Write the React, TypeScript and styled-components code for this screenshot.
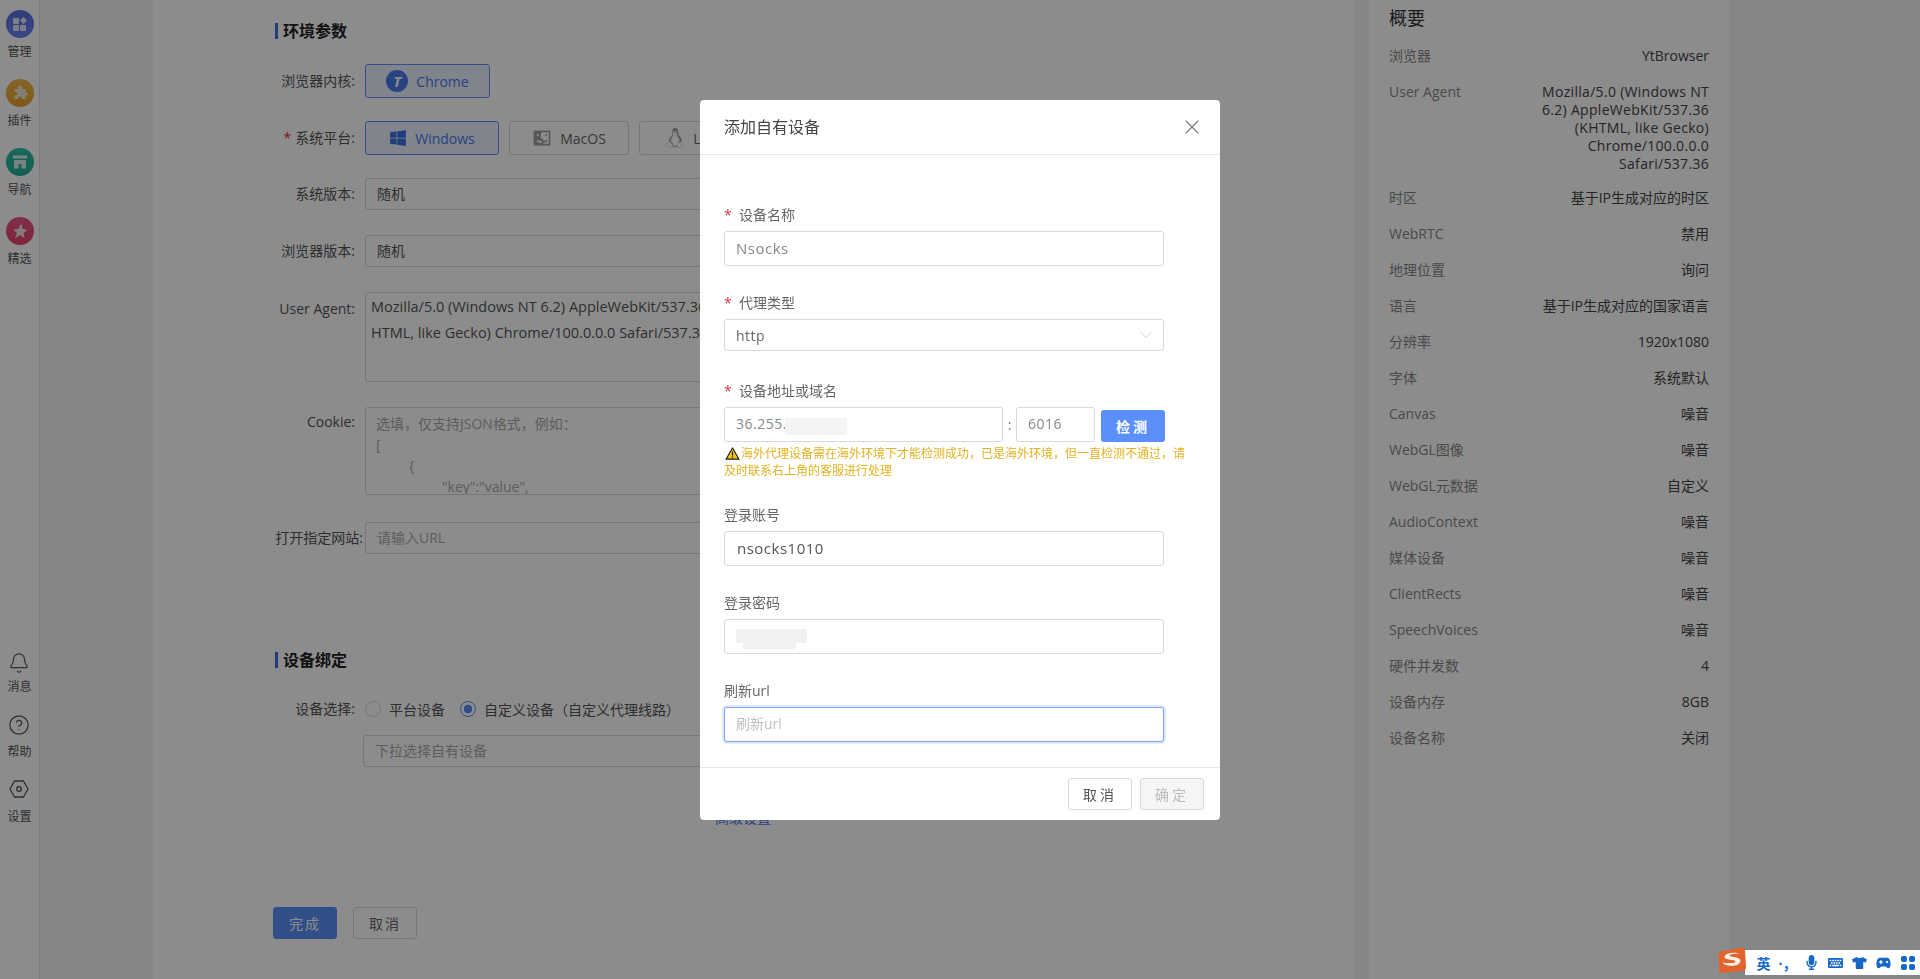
import React from 'react';
import styled, { createGlobalStyle } from 'styled-components';
import { Bell, ChevronDown, CircleHelp, X } from 'lucide-react';
import { FaKeyboard, FaLinux, FaMicrophone, FaTshirt, FaWindows } from 'react-icons/fa';
import { RiFinderFill } from 'react-icons/ri';

const FONT = '"Open Sans", "Noto Sans CJK SC", sans-serif';

const GlobalStyle = createGlobalStyle`
  html, body {
    margin: 0;
    height: 100%;
    overflow: hidden;
    background: #ffffff;
    font-family: ${FONT};
    font-size: 14px;
    color: #333333;
  }
  * { box-sizing: border-box; }
`;

const Page = styled.div`
  display: flex;
  width: 1920px;
  height: 979px;
  background: #f2f4f7;
`;

const Rail = styled.nav`
  display: flex;
  flex-direction: column;
  justify-content: space-between;
  width: 40px;
  padding: 10px 0 154px;
  background: #ffffff;
  border-right: 1px solid #dcdfe4;
`;

const RailGroup = styled.div<{ $gap: number }>`
  display: flex;
  flex-direction: column;
  align-items: center;
  gap: ${(p) => p.$gap}px;
`;

const RailItem = styled.div<{ $gap: number }>`
  display: flex;
  flex-direction: column;
  align-items: center;
  gap: ${(p) => p.$gap}px;
  font-size: 12px;
  line-height: 16px;
  color: #555555;
`;

const RailBadge = styled.div<{ $from: string; $to: string }>`
  display: flex;
  align-items: center;
  justify-content: center;
  width: 28px;
  height: 28px;
  border-radius: 50%;
  background: linear-gradient(180deg, ${(p) => p.$from}, ${(p) => p.$to});
`;

const LeftGap = styled.div`
  width: 113px;
`;

const Main = styled.main`
  width: 1201px;
  padding: 23px 0 0 122px;
  background: #ffffff;
  overflow: hidden;
`;

const SectionTitle = styled.h2<{ $top?: number }>`
  margin: ${(p) => p.$top ?? 0}px 0 0;
  padding-left: 5px;
  border-left: 3px solid #3d6fe0;
  font-size: 16px;
  line-height: 16px;
  font-weight: 700;
  color: #222222;
`;

const FormRow = styled.div<{ $top: number }>`
  display: flex;
  align-items: flex-start;
  margin-top: ${(p) => p.$top}px;
`;

const RowLabel = styled.label<{ $height?: number; $wide?: boolean }>`
  flex: none;
  width: ${(p) => (p.$wide ? 88 : 80)}px;
  margin-right: ${(p) => (p.$wide ? 2 : 10)}px;
  line-height: ${(p) => p.$height ?? 32}px;
  font-size: 14px;
  text-align: right;
  white-space: nowrap;
  color: #555555;
`;

const Star = styled.span`
  margin-right: 4px;
  color: #e0363c;
`;

const Choices = styled.div`
  display: flex;
  gap: 10px;
`;

const Choice = styled.div<{ $active?: boolean; $width: number }>`
  display: flex;
  align-items: center;
  justify-content: center;
  gap: 8px;
  width: ${(p) => p.$width}px;
  height: 34px;
  border: 1px solid ${(p) => (p.$active ? '#5b8ff9' : '#d9d9d9')};
  border-radius: 3px;
  background: ${(p) => (p.$active ? '#e9f0ff' : '#ffffff')};
  color: ${(p) => (p.$active ? '#4a7ae8' : '#666666')};
  font-size: 14px;
  white-space: nowrap;
  overflow: hidden;

  svg {
    flex: none;
    color: ${(p) => (p.$active ? '#3f6fe0' : '#a0a0a0')};
  }
`;

const ChromeMark = styled.span`
  display: flex;
  align-items: center;
  justify-content: center;
  width: 22px;
  height: 22px;
  border-radius: 50%;
  background: #4a7ae8;
  color: #ffffff;
  font-size: 15px;
  font-weight: 700;
  font-style: italic;
`;

const FieldBox = styled.div`
  width: 390px;
  height: 32px;
  padding: 0 11px;
  border: 1px solid #d9d9d9;
  border-radius: 3px;
  background: #ffffff;
  font-size: 14px;
  line-height: 30px;
  color: #555555;
`;

const GhostText = styled.span`
  color: #aaaaaa;
`;

const AgentBox = styled.div`
  width: 372px;
  height: 90px;
  padding: 1px 5px;
  border: 1px solid #d9d9d9;
  border-radius: 3px;
  font-size: 14.5px;
  line-height: 26px;
  color: #555555;
  word-break: break-all;
`;

const CookieBox = styled.div`
  width: 390px;
  height: 88px;
  padding: 5px 10px;
  border: 1px solid #d9d9d9;
  border-radius: 3px;
  overflow: hidden;
  font-size: 14px;
  line-height: 21px;
  color: #aaaaaa;
`;

const CookieLine = styled.div<{ $indent?: number }>`
  padding-left: ${(p) => p.$indent ?? 0}px;
  white-space: pre;
`;

const RadioGroup = styled.div`
  display: flex;
  align-items: center;
  height: 20px;
  gap: 8px;
  font-size: 14px;
  color: #555555;
`;

const Radio = styled.span<{ $checked?: boolean }>`
  display: inline-block;
  width: 16px;
  height: 16px;
  margin-left: ${(p) => (p.$checked ? 7 : 0)}px;
  border-radius: 50%;
  border: 1px solid ${(p) => (p.$checked ? '#5b8ff9' : '#d9d9d9')};
  background: ${(p) =>
    p.$checked ? 'radial-gradient(circle, #5b8ff9 0 4px, #ffffff 4.6px)' : '#ffffff'};
`;

const DeviceSelect = styled(FieldBox)`
  margin: 16px 0 0 88px;
`;

const AdvancedLink = styled.a`
  display: block;
  margin: 41px 0 0 440px;
  font-size: 14px;
  line-height: 20px;
  color: #4a7ae8;
`;

const ActionRow = styled.div`
  display: flex;
  gap: 16px;
  margin: 79px 0 0 -2px;
`;

const ActionButton = styled.button<{ $primary?: boolean }>`
  width: 64px;
  height: 32px;
  padding: 0;
  border: 1px solid ${(p) => (p.$primary ? '#5b8ff9' : '#d9d9d9')};
  border-radius: 3px;
  background: ${(p) => (p.$primary ? '#5b8ff9' : '#ffffff')};
  color: ${(p) => (p.$primary ? '#ffffff' : '#666666')};
  font-family: ${FONT};
  font-size: 14px;
  letter-spacing: 2px;
`;

const MidGap = styled.div`
  width: 15px;
`;

const Summary = styled.aside`
  width: 360px;
  padding: 8px 20px 0;
  background: #ffffff;
`;

const SummaryTitle = styled.h3`
  margin: 0 0 10px;
  font-size: 18px;
  line-height: 20px;
  font-weight: 400;
  color: #333333;
`;

const SummaryRow = styled.div`
  display: flex;
  justify-content: space-between;
  gap: 40px;
  padding: 9px 0;
  font-size: 14px;
  line-height: 18px;
`;

const SummaryKey = styled.span`
  flex: none;
  color: #888888;
`;

const SummaryValue = styled.span<{ $long?: boolean }>`
  max-width: 180px;
  margin-bottom: ${(p) => (p.$long ? -2 : 0)}px;
  letter-spacing: ${(p) => (p.$long ? 0.3 : 0)}px;
  text-align: right;
  color: #444444;
`;

const Mask = styled.div`
  position: fixed;
  inset: 0;
  display: flex;
  justify-content: center;
  align-items: flex-start;
  padding-top: 100px;
  background: rgba(0, 0, 0, 0.45);
`;

const Modal = styled.section`
  display: flex;
  flex-direction: column;
  width: 520px;
  height: 720px;
  border-radius: 4px;
  background: #ffffff;
  overflow: hidden;
`;

const ModalHeader = styled.header`
  display: flex;
  align-items: center;
  justify-content: space-between;
  flex: none;
  height: 55px;
  padding: 0 16px 2px 24px;
  border-bottom: 1px solid #e8e8e8;
  font-size: 16px;
  color: #444444;

  svg {
    margin-top: 2px;
    color: #777777;
  }
`;

const ModalBody = styled.div`
  flex: 1;
  padding: 50px 0 0 24px;
`;

const Field = styled.div<{ $top?: number }>`
  margin-top: ${(p) => p.$top ?? 0}px;
`;

const FieldLabel = styled.div`
  margin-bottom: 6px;
  font-size: 14px;
  line-height: 20px;
  color: #666666;
`;

const FieldStar = styled.span`
  display: inline-block;
  width: 15px;
  color: #d9363e;
`;

const InputWrap = styled.div`
  position: relative;
`;

const TextInput = styled.input<{ $w?: number; $pad?: number; $size?: number; $focus?: boolean; $strong?: boolean }>`
  display: block;
  width: ${(p) => p.$w ?? 440}px;
  height: 35px;
  padding: 0 ${(p) => p.$pad ?? 11}px 2px;
  border: 1px solid ${(p) => (p.$focus ? '#7aa5f8' : '#d9d9d9')};
  border-radius: 3px;
  outline: none;
  box-shadow: ${(p) => (p.$focus ? '0 0 0 2px rgba(91, 143, 249, 0.2)' : 'none')};
  font-family: ${FONT};
  font-size: ${(p) => p.$size ?? 14}px;
  letter-spacing: 0.5px;
  color: ${(p) => (p.$strong ? '#555555' : '#888888')};

  &::placeholder { color: #bfbfbf; letter-spacing: 0; }
`;

const SelectBox = styled.div`
  display: flex;
  align-items: center;
  justify-content: space-between;
  width: 440px;
  height: 32px;
  padding: 0 7px 0 11px;
  border: 1px solid #d9d9d9;
  border-radius: 3px;
  font-size: 14px;
  letter-spacing: 0.5px;
  color: #666666;

  svg { color: #c4c4c4; }
`;

const AddressRow = styled.div`
  display: flex;
  align-items: flex-end;
  width: 442px;
`;

const Colon = styled.span`
  width: 13px;
  line-height: 35px;
  text-align: center;
  color: #777777;
`;

const DetectButton = styled.button`
  flex: none;
  width: 64px;
  height: 32px;
  margin-left: 6px;
  padding: 0;
  border: 0;
  border-radius: 3px;
  background: #5b8ff9;
  color: #ffffff;
  font-family: ${FONT};
  font-size: 14px;
  font-weight: 600;
  letter-spacing: 3px;
`;

const AddressCensor = styled.span`
  position: absolute;
  left: 61px;
  top: 11px;
  width: 62px;
  height: 17px;
  background: #f4f4f4;
`;

const PasswordCensor = styled.span`
  position: absolute;
  left: 12px;
  top: 10px;
  width: 71px;
  height: 20px;
  background:
    linear-gradient(#f1f1f1, #f1f1f1) 0 0 / 100% 14px no-repeat,
    linear-gradient(#f1f1f1, #f1f1f1) 7px 14px / 53px 6px no-repeat;
`;

const Warning = styled.div`
  width: 470px;
  margin-top: 3px;
  font-size: 12px;
  line-height: 17px;
  color: #e3b11f;

  svg { vertical-align: -2px; margin: 0 1px 0 1px; }
`;

const ModalFooter = styled.footer`
  display: flex;
  justify-content: flex-end;
  gap: 8px;
  flex: none;
  height: 53px;
  padding: 10px 16px 0;
  border-top: 1px solid #e8e8e8;
`;

const FooterButton = styled.button<{ $disabled?: boolean }>`
  width: 64px;
  height: 32px;
  padding: 0;
  border: 1px solid #d9d9d9;
  border-radius: 3px;
  background: ${(p) => (p.$disabled ? '#f5f5f5' : '#ffffff')};
  color: ${(p) => (p.$disabled ? '#bbbbbb' : '#555555')};
  font-family: ${FONT};
  font-size: 14px;
  letter-spacing: 3px;
`;

const ImeBar = styled.div`
  position: fixed;
  right: 0;
  top: 950px;
  display: flex;
  align-items: center;
  width: 175px;
  height: 25px;
  padding-left: 11px;
  gap: 9px;
  background: #ffffff;
  color: #1668c8;
`;

const ImeLogo = styled.svg`
  position: fixed;
  left: 1717px;
  top: 946px;
  z-index: 1;
`;

const ImeGlyph = styled.span`
  display: flex;
  justify-content: center;
  width: 15px;
  font-size: 14px;
  font-weight: 700;
`;

const summaryRows = [
  ['浏览器', 'YtBrowser'],
  ['User Agent', 'Mozilla/5.0 (Windows NT 6.2) AppleWebKit/537.36 (KHTML, like Gecko) Chrome/100.0.0.0 Safari/537.36'],
  ['时区', '基于IP生成对应的时区'],
  ['WebRTC', '禁用'],
  ['地理位置', '询问'],
  ['语言', '基于IP生成对应的国家语言'],
  ['分辨率', '1920x1080'],
  ['字体', '系统默认'],
  ['Canvas', '噪音'],
  ['WebGL图像', '噪音'],
  ['WebGL元数据', '自定义'],
  ['AudioContext', '噪音'],
  ['媒体设备', '噪音'],
  ['ClientRects', '噪音'],
  ['SpeechVoices', '噪音'],
  ['硬件并发数', '4'],
  ['设备内存', '8GB'],
  ['设备名称', '关闭'],
];

const ManageIcon = () => (
  <svg width="16" height="16" viewBox="0 0 16 16" fill="#e6e8f5">
    <rect x="1" y="2" width="6" height="6" rx="1" />
    <rect x="1" y="9" width="6" height="6" rx="1" />
    <rect x="8" y="9" width="6" height="6" rx="1" />
    <path d="M11.5 1 15 4.5 11.5 8 8 4.5z" />
  </svg>
);

const PluginIcon = () => (
  <svg width="16" height="16" viewBox="0 0 16 16" fill="#f5e9cf">
    <path d="M6 2.5a2 2 0 0 1 4 0V4h3.500v3.200h1a1.900 1.900 0 0 1 0 3.600h-1V14H9.800v-1a1.800 1.800 0 0 0-3.600 0v1H2.500v-3.500h1a1.800 1.800 0 0 0 0-3.600h-1V4H6z" />
  </svg>
);

const StoreIcon = () => (
  <svg width="16" height="16" viewBox="0 0 16 16" fill="#dcefeb">
    <rect x="1" y="1.500" width="14" height="3" rx="0.500" />
    <path d="M2 6h12v8.500H9.500V10h-3v4.500H2z" />
  </svg>
);

const StarIcon = () => (
  <svg width="18" height="18" viewBox="0 0 18 18" fill="#f6dde4">
    <path d="M10.500 1 11.500 6.800 16.500 8 12.500 11 13.500 16 9 13 4 16.500 6 11 2 7.500 7.500 7z" />
  </svg>
);

const HexIcon = () => (
  <svg width="22" height="20" viewBox="0 0 22 20" fill="none" stroke="#555555" strokeWidth="1.300">
    <path d="M6.500 2h9L20 10l-4.500 8h-9L2 10z" strokeLinejoin="round" />
    <circle cx="11" cy="10" r="2.300" />
  </svg>
);

const WarnIcon = () => (
  <svg width="15" height="13" viewBox="0 0 15 13">
    <path d="M7.500 1 14 12.200H1z" fill="#f1c40f" stroke="#222222" strokeWidth="1.200" strokeLinejoin="round" />
    <path d="M7.500 4.500v4M7.500 9.500v1.200" stroke="#222222" strokeWidth="1.200" />
  </svg>
);

const GamepadIcon = () => (
  <svg width="17" height="14" viewBox="0 0 17 14">
    <path
      d="M4.500 1h8C15 1 16.500 4 16.500 8c0 3-1 5-2.500 5-1.300 0-2-2-3.500-2h-4C5 11 4.300 13 3 13 1.500 13 .5 11 .5 8 .5 4 2 1 4.500 1z"
      fill="currentColor"
    />
    <path d="M3.500 6h4M5.500 4v4" stroke="#ffffff" strokeWidth="1.400" />
    <circle cx="12.500" cy="6" r="1.300" fill="#ffffff" />
  </svg>
);

const GridIcon = () => (
  <svg width="14" height="14" viewBox="0 0 14 14" fill="currentColor">
    <rect x="0" y="0" width="6" height="6" rx="2" />
    <rect x="8" y="0" width="6" height="6" rx="2" />
    <rect x="0" y="8" width="6" height="6" rx="2" />
    <rect x="8" y="8" width="6" height="6" rx="2" />
  </svg>
);

const App = () => {
  return (
    <>
      <GlobalStyle />
      <Page>
        <Rail>
          <RailGroup $gap={19}>
            <RailItem $gap={6}>
              <RailBadge $from="#5a6fe0" $to="#6d80f0"><ManageIcon /></RailBadge>
              管理
            </RailItem>
            <RailItem $gap={6}>
              <RailBadge $from="#f0b84a" $to="#e8a030"><PluginIcon /></RailBadge>
              插件
            </RailItem>
            <RailItem $gap={6}>
              <RailBadge $from="#2fbfa8" $to="#25b098"><StoreIcon /></RailBadge>
              导航
            </RailItem>
            <RailItem $gap={6}>
              <RailBadge $from="#e8558a" $to="#e8456a"><StarIcon /></RailBadge>
              精选
            </RailItem>
          </RailGroup>
          <RailGroup $gap={19}>
            <RailItem $gap={5}>
              <Bell size={22} strokeWidth={1.3} color="#555555" />
              消息
            </RailItem>
            <RailItem $gap={8}>
              <CircleHelp size={22} strokeWidth={1.3} color="#555555" />
              帮助
            </RailItem>
            <RailItem $gap={10}>
              <HexIcon />
              设置
            </RailItem>
          </RailGroup>
        </Rail>
        <LeftGap />
        <Main>
          <SectionTitle>环境参数</SectionTitle>
          <FormRow $top={25}>
            <RowLabel $height={34}>浏览器内核:</RowLabel>
            <Choice $active $width={125}>
              <ChromeMark>T</ChromeMark>
              Chrome
            </Choice>
          </FormRow>
          <FormRow $top={23}>
            <RowLabel $height={34}><Star>*</Star>系统平台:</RowLabel>
            <Choices>
              <Choice $active $width={134}>
                <FaWindows size={18} />
                Windows
              </Choice>
              <Choice $width={120}>
                <RiFinderFill size={20} />
                MacOS
              </Choice>
              <Choice $width={116}>
                <FaLinux size={20} />
                Linux
              </Choice>
            </Choices>
          </FormRow>
          <FormRow $top={23}>
            <RowLabel>系统版本:</RowLabel>
            <FieldBox>随机</FieldBox>
          </FormRow>
          <FormRow $top={25}>
            <RowLabel>浏览器版本:</RowLabel>
            <FieldBox>随机</FieldBox>
          </FormRow>
          <FormRow $top={25}>
            <RowLabel $height={34}>User Agent:</RowLabel>
            <AgentBox>
              Mozilla/5.0 (Windows NT 6.2) AppleWebKit/537.36 (KHTML, like Gecko) Chrome/100.0.0.0 Safari/537.36
            </AgentBox>
          </FormRow>
          <FormRow $top={25}>
            <RowLabel $height={30}>Cookie:</RowLabel>
            <CookieBox>
              <CookieLine>选填，仅支持JSON格式，例如：</CookieLine>
              <CookieLine>[</CookieLine>
              <CookieLine $indent={33}>{'{'}</CookieLine>
              <CookieLine $indent={66}>"key":"value",</CookieLine>
            </CookieBox>
          </FormRow>
          <FormRow $top={27}>
            <RowLabel $wide>打开指定网站:</RowLabel>
            <FieldBox><GhostText>请输入URL</GhostText></FieldBox>
          </FormRow>
          <SectionTitle $top={98}>设备绑定</SectionTitle>
          <FormRow $top={31}>
            <RowLabel $height={20}>设备选择:</RowLabel>
            <RadioGroup>
              <Radio />
              平台设备
              <Radio $checked />
              自定义设备（自定义代理线路）
            </RadioGroup>
          </FormRow>
          <DeviceSelect><GhostText>下拉选择自有设备</GhostText></DeviceSelect>
          <AdvancedLink>高级设置</AdvancedLink>
          <ActionRow>
            <ActionButton $primary>完成</ActionButton>
            <ActionButton>取消</ActionButton>
          </ActionRow>
        </Main>
        <MidGap />
        <Summary>
          <SummaryTitle>概要</SummaryTitle>
          {summaryRows.map(([key, value]) => (
            <SummaryRow key={key}>
              <SummaryKey>{key}</SummaryKey>
              <SummaryValue $long={key === 'User Agent'}>{value}</SummaryValue>
            </SummaryRow>
          ))}
        </Summary>
      </Page>
      <Mask>
        <Modal>
          <ModalHeader>
            添加自有设备
            <X size={24} strokeWidth={1.1} />
          </ModalHeader>
          <ModalBody>
            <Field>
              <FieldLabel><FieldStar>*</FieldStar>设备名称</FieldLabel>
              <TextInput $size={15} defaultValue="Nsocks" />
            </Field>
            <Field $top={27}>
              <FieldLabel><FieldStar>*</FieldStar>代理类型</FieldLabel>
              <SelectBox>
                http
                <ChevronDown size={20} strokeWidth={0.9} />
              </SelectBox>
            </Field>
            <Field $top={30}>
              <FieldLabel><FieldStar>*</FieldStar>设备地址或域名</FieldLabel>
              <AddressRow>
                <InputWrap>
                  <TextInput $w={279} defaultValue="36.255." />
                  <AddressCensor />
                </InputWrap>
                <Colon>:</Colon>
                <TextInput $w={79} defaultValue="6016" />
                <DetectButton>检测</DetectButton>
              </AddressRow>
              <Warning>
                <WarnIcon />
                海外代理设备需在海外环境下才能检测成功，已是海外环境，但一直检测不通过，请及时联系右上角的客服进行处理
              </Warning>
            </Field>
            <Field $top={26}>
              <FieldLabel>登录账号</FieldLabel>
              <TextInput $pad={12} $size={15} $strong defaultValue="nsocks1010" />
            </Field>
            <Field $top={27}>
              <FieldLabel>登录密码</FieldLabel>
              <InputWrap>
                <TextInput />
                <PasswordCensor />
              </InputWrap>
            </Field>
            <Field $top={27}>
              <FieldLabel>刷新url</FieldLabel>
              <TextInput $focus placeholder="刷新url" />
            </Field>
          </ModalBody>
          <ModalFooter>
            <FooterButton>取消</FooterButton>
            <FooterButton $disabled>确定</FooterButton>
          </ModalFooter>
        </Modal>
      </Mask>
      <ImeLogo width="30" height="28" viewBox="0 0 30 28">
        <path d="M5 5.500 24 1.500c2-.4 3.500.6 4 2.500l1 17c.2 2-.8 3.300-2.800 3.700L6 26.800c-2 .3-3.500-.7-4-2.500L1.500 9c-.2-2 1.300-3.200 3.500-3.500z" fill="#e2632c" />
        <path d="M23 7.500C17 6 8 7 7.500 11c-.4 3.500 11 2 11 4.500 0 1.800-7 2-13 1 3 4.500 17 5 18-1.500.6-4.500-11-3.500-11-5.500 0-1.200 5-1.800 10.500-2z" fill="#fbeee6" />
      </ImeLogo>
      <ImeBar>
        <ImeGlyph>英</ImeGlyph>
        <ImeGlyph>·，</ImeGlyph>
        <ImeGlyph><FaMicrophone size={15} /></ImeGlyph>
        <ImeGlyph><FaKeyboard size={16} /></ImeGlyph>
        <ImeGlyph><FaTshirt size={16} /></ImeGlyph>
        <ImeGlyph><GamepadIcon /></ImeGlyph>
        <ImeGlyph><GridIcon /></ImeGlyph>
      </ImeBar>
    </>
  );
};

export default App;
